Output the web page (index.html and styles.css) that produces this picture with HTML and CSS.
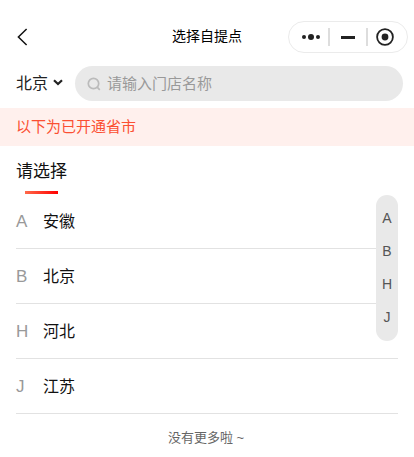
FILE: index.html
```html
<!DOCTYPE html>
<html lang="zh-CN">
<head>
    <meta charset="UTF-8">
    <meta name="viewport" content="width=device-width, initial-scale=1.0">
    <title>选择自提点</title>
    <link rel="stylesheet" href="styles.css">
</head>
<body>
    <div class="page">
        <div class="navbar">
            <svg class="back" width="12" height="18" viewBox="0 0 12 18">
                <path d="M10.6 1 L2.4 9 L10.6 17" fill="none" stroke="#111" stroke-width="1.5"/>
            </svg>
            <div class="nav-title">选择自提点</div>
            <div class="capsule">
                <svg class="capsule-dots" width="20" height="8" viewBox="0 0 20 8">
                    <circle cx="3" cy="4" r="2" fill="#222"/>
                    <circle cx="10" cy="4" r="3" fill="#222"/>
                    <circle cx="17" cy="4" r="2" fill="#222"/>
                </svg>
                <span class="capsule-line"></span>
                <span class="capsule-minus"></span>
                <span class="capsule-line"></span>
                <svg class="capsule-close" width="18" height="18" viewBox="0 0 18 18">
                    <circle cx="9" cy="9" r="7.9" fill="none" stroke="#222" stroke-width="1.8"/>
                    <circle cx="9" cy="9" r="3.4" fill="#222"/>
                </svg>
            </div>
        </div>

        <div class="search-row">
            <div class="city">
                <span class="city-name">北京</span>
                <svg width="10" height="7" viewBox="0 0 10 7">
                    <path d="M1 1.2 L5 5 L9 1.2" fill="none" stroke="#222" stroke-width="2.2"/>
                </svg>
            </div>
            <div class="search">
                <svg width="14" height="14" viewBox="0 0 14 14">
                    <circle cx="6.5" cy="6.5" r="5.2" fill="none" stroke="#bbb" stroke-width="1.7"/>
                    <path d="M10.4 10.4 L12.8 12.8" stroke="#bbb" stroke-width="1.7"/>
                </svg>
                <span class="search-text">请输入门店名称</span>
            </div>
        </div>

        <div class="notice">以下为已开通省市</div>

        <div class="section-title">请选择</div>
        <div class="section-line"></div>

        <div class="list">
            <div class="row"><span class="letter">A</span><span class="name">安徽</span></div>
            <div class="row"><span class="letter">B</span><span class="name">北京</span></div>
            <div class="row"><span class="letter">H</span><span class="name">河北</span></div>
            <div class="row"><span class="letter">J</span><span class="name">江苏</span></div>
        </div>

        <div class="footer">没有更多啦 ~</div>

        <div class="index-bar">
            <span>A</span>
            <span>B</span>
            <span>H</span>
            <span>J</span>
        </div>
    </div>
</body>
</html>
```

FILE: styles.css
```css
html, body {
    margin: 0;
    padding: 0;
    background: #ffffff;
}
body {
    font-family: "Liberation Sans", "Noto Sans CJK SC", sans-serif;
    color: #111111;
}
.page {
    position: relative;
    width: 414px;
    height: 457px;
    overflow: hidden;
}
.navbar {
    height: 66px;
    padding: 8px 6px 0 16px;
    box-sizing: border-box;
    display: flex;
    align-items: center;
}
.back {
    display: block;
}
.nav-title {
    flex: 1;
    padding-left: 98px;
    margin-top: -2px;
    box-sizing: border-box;
    font-size: 14px;
    line-height: 20px;
    text-align: center;
    color: #000000;
}
.capsule {
    width: 120px;
    height: 32px;
    box-sizing: border-box;
    border: 1px solid #ebebeb;
    border-radius: 16px;
    display: flex;
    align-items: center;
    padding-left: 12px;
}
.capsule-line {
    width: 1.5px;
    height: 18px;
    margin: 0 11px 0 7px;
    background: #dddddd;
}
.capsule-minus {
    width: 14px;
    height: 3px;
    background: #222222;
}
.capsule-minus + .capsule-line {
    margin: 0 8px 0 11.5px;
}
.search-row {
    height: 35px;
    padding: 0 11px 0 16px;
    display: flex;
    align-items: center;
}
.city {
    width: 59px;
    display: flex;
    align-items: center;
    gap: 5px;
    padding-bottom: 2px;
    font-size: 16px;
    color: #222222;
}
.city-name {
    margin-bottom: 2px;
}
.search {
    flex: 1;
    height: 35px;
    background: #e9e9e9;
    border-radius: 18px;
    display: flex;
    align-items: center;
    gap: 6px;
    padding-left: 12px;
    font-size: 15px;
    color: #999999;
}
.search-text {
    margin-bottom: 2px;
}
.notice {
    margin-top: 7px;
    height: 38px;
    line-height: 37px;
    padding-left: 16px;
    background: #fff0ed;
    color: #fb4f32;
    font-size: 15px;
}
.section-title {
    margin-top: 13px;
    padding-left: 16px;
    font-size: 17px;
    line-height: 25px;
    color: #111111;
}
.section-line {
    width: 33px;
    height: 3px;
    margin: 7px 0 0 25px;
    background: linear-gradient(to right, #ff6a4a, #ff0000);
}
.list {
    margin: 0 16px;
}
.row {
    height: 54px;
    border-bottom: 1px solid #e2e2e2;
    display: flex;
    align-items: center;
    font-size: 16px;
    color: #111111;
}
.letter {
    width: 27px;
    margin-top: 2px;
    font-size: 17px;
    color: #999999;
}
.name {
    margin-bottom: 2px;
}
.footer {
    margin-top: 14px;
    padding-right: 2px;
    text-align: center;
    font-size: 13px;
    line-height: 20px;
    color: #666666;
}
.index-bar {
    position: absolute;
    left: 376px;
    top: 195px;
    width: 22px;
    height: 146px;
    padding-top: 7px;
    box-sizing: border-box;
    background: #e9e9e9;
    border-radius: 11px;
    display: flex;
    flex-direction: column;
    align-items: center;
    font-size: 14px;
    line-height: 33px;
    color: #555555;
}
```
